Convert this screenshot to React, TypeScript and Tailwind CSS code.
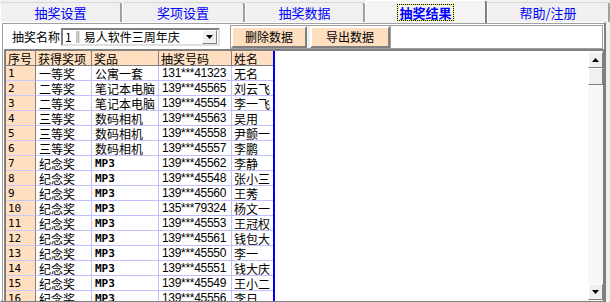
const rows: [string, string, string, string, string][] = [
  ["1", "一等奖", "公寓一套", "131***41323", "无名"],
  ["2", "二等奖", "笔记本电脑", "139***45565", "刘云飞"],
  ["3", "二等奖", "笔记本电脑", "139***45554", "李一飞"],
  ["4", "三等奖", "数码相机", "139***45563", "吴用"],
  ["5", "三等奖", "数码相机", "139***45558", "尹颤一"],
  ["6", "三等奖", "数码相机", "139***45557", "李鹏"],
  ["7", "纪念奖", "MP3", "139***45562", "李静"],
  ["8", "纪念奖", "MP3", "139***45548", "张小三"],
  ["9", "纪念奖", "MP3", "139***45560", "王莠"],
  ["10", "纪念奖", "MP3", "135***79324", "杨文一"],
  ["11", "纪念奖", "MP3", "139***45553", "王冠权"],
  ["12", "纪念奖", "MP3", "139***45561", "钱包大"],
  ["13", "纪念奖", "MP3", "139***45550", "李一"],
  ["14", "纪念奖", "MP3", "139***45551", "钱大庆"],
  ["15", "纪念奖", "MP3", "139***45549", "王小二"],
  ["16", "纪念奖", "MP3", "139***45556", "李日"],
];

const tabs = [
  { label: "抽奖设置", w: "w-[122px]" },
  { label: "奖项设置", w: "w-[123px]" },
  { label: "抽奖数据", w: "w-[120px]" },
  { label: "抽奖结果", w: "w-[122px]", active: true },
  { label: "帮助/注册", w: "w-[123px]" },
];

function Tab({ label, w, active }: { label: string; w: string; active?: boolean }) {
  if (active) {
    return (
      <div className={`${w} h-[23px] flex items-center justify-center rounded-t-[3px] border-l border-t border-r-2 border-l-white border-t-white border-r-[#808080] bg-[#f4f4f4] relative z-10 -mb-px text-[13px]`}>
        <span className="px-px leading-[15px] font-bold text-[#0000ff] border border-dotted border-black bg-[#ffff00] shadow-[inset_0_0_0_20px_#f4f4f4]">
          {label}
        </span>
      </div>
    );
  }
  return (
    <div className={`${w} h-[20px] mt-[2px] flex items-center justify-center rounded-t-[3px] border-l border-t border-r-2 border-l-white border-t-[#d8d8d8] border-r-[#a0a0a0] bg-[#f0f0f0] text-[#0000ff] text-[13px]`}>
      {label}
    </div>
  );
}

const cols = ["w-[56px]", "w-[67px]", "w-[73px]", "w-[41px]"];

export default function App() {
  return (
    <div className="w-[610px] h-[302px] overflow-hidden bg-[#f0f0f0] text-[12px] leading-[15px] text-black font-['Noto_Sans_CJK_SC',sans-serif]">
      <div className="flex h-[22px] items-end">
        {tabs.map((t) => (
          <Tab key={t.label} {...t} />
        ))}
      </div>

      <div className="h-[280px] border-t border-l-2 border-white border-r-2 border-r-[#808080] border-b-2 border-b-[#808080] mr-[4px] flex flex-col">
        <div className="h-[278px] border-t border-l border-[#a0a0a0] bg-white flex flex-col">
          {/* toolbar */}
          <div className="h-[25px] flex items-center shrink-0">
            <span className="ml-[9px] w-[48px] whitespace-nowrap">抽奖名称</span>
            <div className="ml-px w-[159px] h-[18px] flex items-center border-2 border-t-[#808080] border-l-[#808080] border-r-[#e0e0e0] border-b-[#e0e0e0] bg-white">
              <span className="pl-[2px] flex-1 whitespace-nowrap overflow-hidden">1‖易人软件三周年庆</span>
              <div className="w-[15px] h-[14px] mr-px flex items-center justify-center bg-[#f0f0f0] border border-t-white border-l-white border-r-[#808080] border-b-[#808080]">
                <svg width="7" height="4" viewBox="0 0 7 4">
                  <path d="M0 0h7L3.5 4z" fill="#000" />
                </svg>
              </div>
            </div>
            <div className="ml-[10px] h-[24px] flex items-stretch border border-[#a0a0a0] bg-[#f0f0f0]">
              <button className="w-[76px] bg-[#ffdfc0] border-2 border-t-white border-l-white border-r-[#808080] border-b-[#808080]">删除数据</button>
              <button className="ml-[3px] w-[80px] bg-[#ffdfc0] border-2 border-t-white border-l-white border-r-[#808080] border-b-[#808080]">导出数据</button>
            </div>
            <div className="flex-1 h-[24px] border border-[#a0a0a0] border-l-0 bg-white mr-px" />
          </div>

          {/* grid */}
          <div className="flex-1 flex border-t-2 border-l-2 border-t-[#808080] border-l-[#808080] ml-[1px] overflow-hidden">
            <div className="flex flex-col border-r-2 border-[#0000ff] h-[400px]">
              <div className="flex h-[15px] bg-[#ffdfc0]">
                <div className="w-[30px] pl-[2px] border-r border-b border-[#808080]">序号</div>
                {["获得奖项", "奖品", "抽奖号码", "姓名"].map((h, i) => (
                  <div key={h} className={`${cols[i]} pl-[2px] border-r border-b border-[#808080] whitespace-nowrap last:border-r-0`}>
                    {h}
                  </div>
                ))}
              </div>
              {rows.map((r) => (
                <div key={r[0]} className="flex h-[15px]">
                  <div className="w-[30px] pl-[2px] bg-[#ffdfc0] border-r border-b border-r-[#808080] border-b-[#c8c8ff] font-['DejaVu_Sans_Mono',monospace] text-[11px]">
                    {r[0]}
                  </div>
                  <div className={`${cols[0]} pl-[3px] border-r border-b border-[#c0c0ff] overflow-hidden`}>{r[1]}</div>
                  <div className={`${cols[1]} pl-[3px] border-r border-b border-[#c0c0ff] whitespace-nowrap overflow-hidden ${r[2] === "MP3" ? "font-['DejaVu_Sans_Mono',monospace] font-bold text-[11px]" : ""}`}>
                    {r[2]}
                  </div>
                  <div className={`${cols[2]} pl-[3px] border-r border-b border-[#c0c0ff] font-['Liberation_Sans',sans-serif] text-[12px] tracking-[-0.3px] whitespace-nowrap overflow-hidden`}>
                    {r[3]}
                  </div>
                  <div className={`${cols[3]} pl-[2px] border-b border-[#c0c0ff] whitespace-nowrap overflow-hidden`}>{r[4]}</div>
                </div>
              ))}
            </div>
            <div className="flex-1" />
            {/* scrollbar */}
            <div className="w-[16px] flex flex-col bg-[repeating-conic-gradient(#f0f0f0_0_25%,#ffffff_0_50%)] bg-[length:2px_2px] border-r border-[#808080]">
              <div className="mt-px h-[16px] flex items-center justify-center bg-[#f0f0f0] border border-t-white border-l-white border-r-[#808080] border-b-[#808080]">
                <svg width="7" height="4" viewBox="0 0 7 4">
                  <path d="M3.5 0L7 4H0z" fill="#000" />
                </svg>
              </div>
              <div className="h-[17px] bg-[#f0f0f0] border border-t-white border-l-white border-r-[#808080] border-b-[#808080]" />
              <div className="flex-1" />
              <div className="h-[16px] mb-px flex items-center justify-center bg-[#f0f0f0] border border-t-white border-l-white border-r-[#808080] border-b-[#808080]">
                <svg width="7" height="4" viewBox="0 0 7 4">
                  <path d="M0 0h7L3.5 4z" fill="#000" />
                </svg>
              </div>
            </div>
          </div>
        </div>
      </div>
    </div>
  );
}
